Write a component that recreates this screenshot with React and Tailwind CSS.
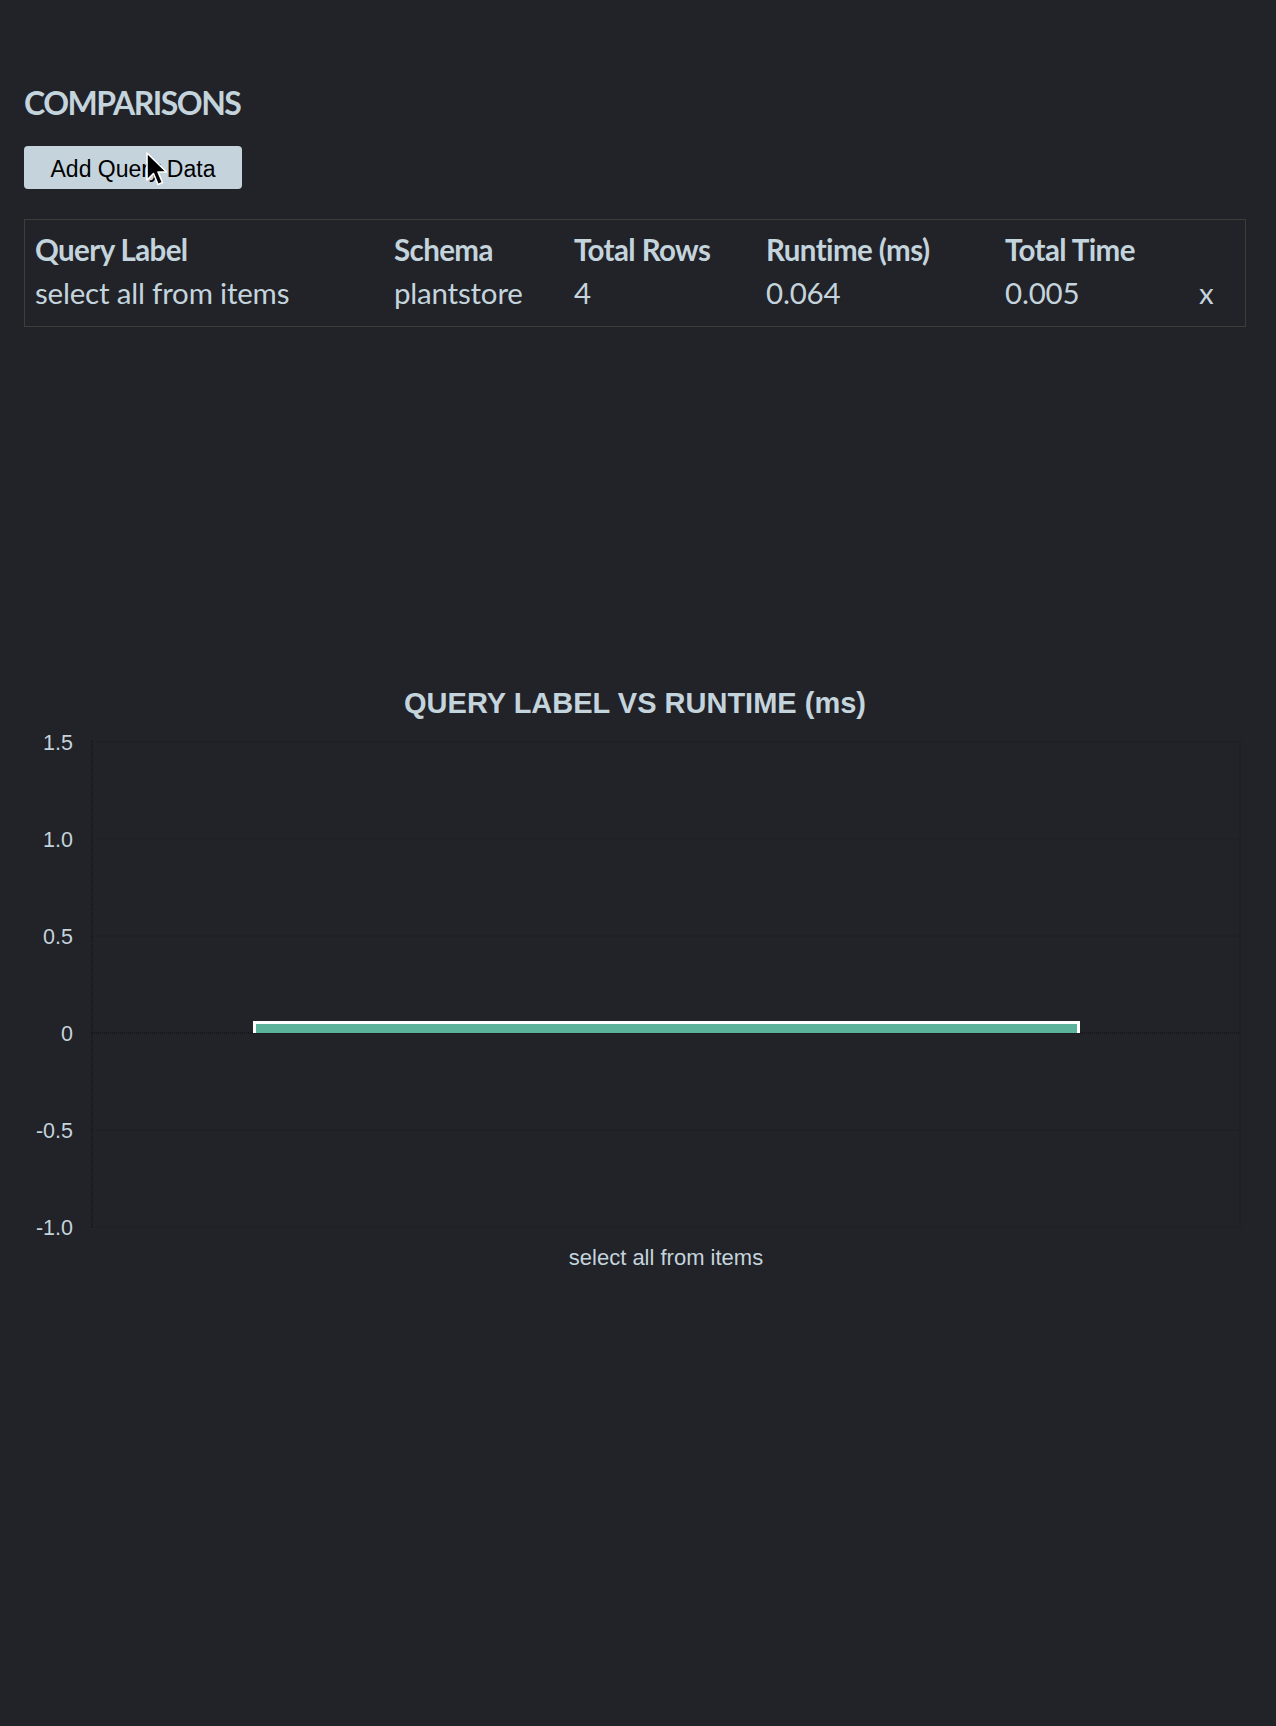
import React from "react";

const TXT = "#c4d4dc";

function Cursor() {
  return (
    <svg
      className="absolute left-[145px] top-[151px]"
      width="24"
      height="38"
      viewBox="0 0 24 38"
    >
      <path
        d="M2 2 L2 29 L8.5 22.5 L13 33.5 L17.5 31.5 L13 21 L21.5 21 Z"
        fill="#000"
        stroke="#fff"
        strokeWidth="1.6"
        strokeLinejoin="round"
      />
    </svg>
  );
}

function Chart() {
  const off = 718;
  const ticks = [
    { l: "1.5", y: 742 },
    { l: "1.0", y: 839 },
    { l: "0.5", y: 936 },
    { l: "0", y: 1033 },
    { l: "-0.5", y: 1130 },
    { l: "-1.0", y: 1227 },
  ];
  return (
    <svg width="1276" height="562" className="block">
      {ticks.map((t) => (
        <g key={t.l}>
          <line
            x1="92"
            x2="1240"
            y1={t.y - off}
            y2={t.y - off}
            stroke={t.l === "0" ? "#0c0c10" : "#18181e"}
            strokeWidth="1"
            strokeDasharray="1 1"
          />
          <text
            x="73"
            y={t.y - off + 7.5}
            textAnchor="end"
            fill={TXT}
            fontFamily="'Liberation Sans', Arial, sans-serif"
            fontSize="21.5"
          >
            {t.l}
          </text>
        </g>
      ))}
      <line x1="92" x2="92" y1={740 - off} y2={1228 - off} stroke="#0c0c10" strokeDasharray="1 1" />
      <line x1="1240" x2="1240" y1={740 - off} y2={1228 - off} stroke="#16161c" strokeDasharray="1 1" />
      <rect x="253" y={1021 - off} width="827" height="12" fill="#5cb39b" />
      <path
        d={`M254.5 ${1033 - off} L254.5 ${1022.5 - off} L1078.5 ${1022.5 - off} L1078.5 ${1033 - off}`}
        fill="none"
        stroke="#ffffff"
        strokeWidth="3"
      />
      <text
        x="666"
        y={1265 - off}
        textAnchor="middle"
        fill={TXT}
        fontFamily="'Liberation Sans', Arial, sans-serif"
        fontSize="22"
      >
        select all from items
      </text>
    </svg>
  );
}

export default function App() {
  const cols = "grid grid-cols-[359px_180px_192px_239px_194px_1fr]";
  return (
    <div className="relative min-h-[1726px] w-full bg-[#222229]">
      <div className="px-[24px] pt-[87px]">
        <h1
          className="text-[32px] leading-none font-bold text-[#c4d4dc] tracking-[-1.5px]"
          style={{ fontFamily: "Lato, 'Noto Sans', sans-serif" }}
        >
          COMPARISONS
        </h1>
        <button
          className="mt-[27px] flex h-[43px] w-[218px] items-center justify-center rounded-[4px] bg-[#c5d3dc] pt-[3px] text-[23px] text-black"
          style={{ fontFamily: "'Liberation Sans', Arial, sans-serif" }}
        >
          Add Query Data
        </button>
        <div
          className="mt-[30px] w-[1222px] border border-[#3b3f37] pl-[10px] pt-[8px] pb-[12px] text-[29.5px] leading-[43px] text-[#c4d4dc]"
          style={{ fontFamily: "Lato, 'Noto Sans', sans-serif" }}
        >
          <div className={cols + " font-bold tracking-[-0.6px]"}>
            <div>Query Label</div>
            <div>Schema</div>
            <div>Total Rows</div>
            <div>Runtime (ms)</div>
            <div>Total Time</div>
            <div></div>
          </div>
          <div className={cols + " tracking-[-0.2px]"}>
            <div>select all from items</div>
            <div>plantstore</div>
            <div>4</div>
            <div>0.064</div>
            <div>0.005</div>
            <div>x</div>
          </div>
        </div>
      </div>
      <div className="mt-[362px]">
        <div
          className="pr-[6px] text-center text-[29px] leading-none font-bold text-[#c4d4dc]"
          style={{ fontFamily: "'Liberation Sans', Arial, sans-serif" }}
        >
          QUERY LABEL VS RUNTIME (ms)
        </div>
        <Chart />
      </div>
      <Cursor />
    </div>
  );
}
